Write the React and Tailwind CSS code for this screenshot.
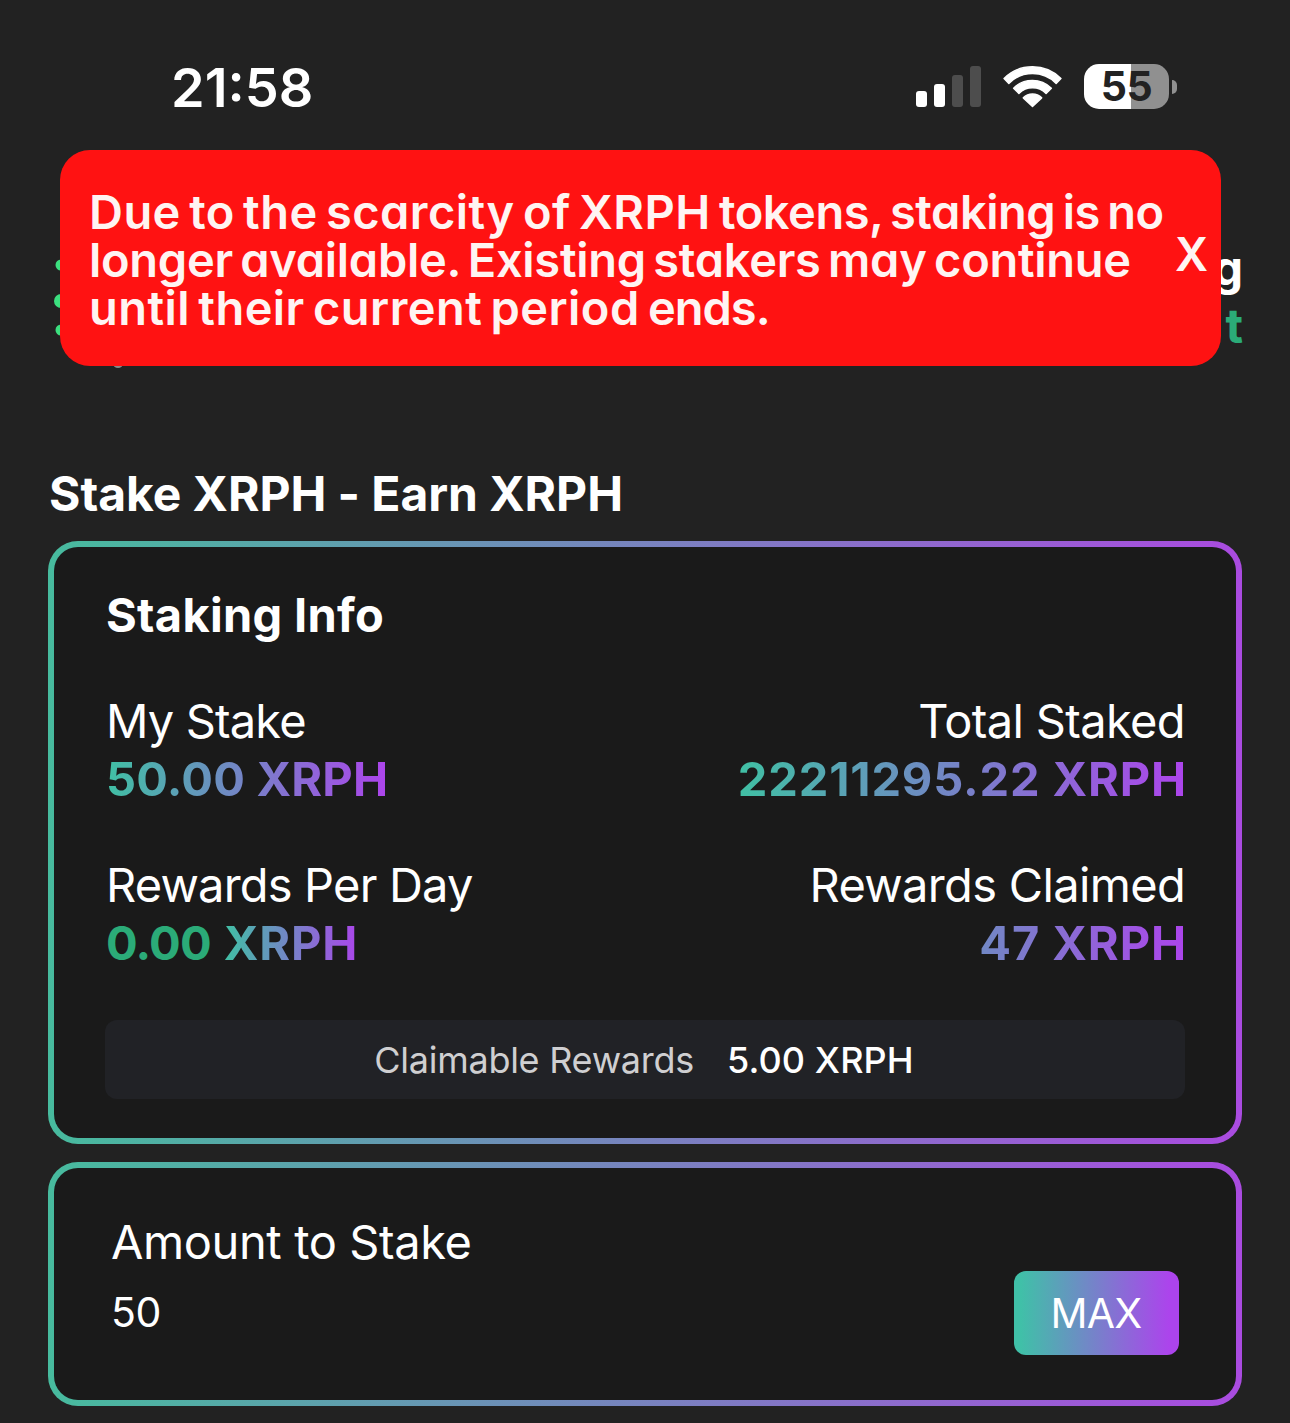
const gradientText =
  "bg-[linear-gradient(90deg,#40c0a4,#ad44ec)] bg-clip-text text-transparent font-bold";

function StatusBar() {
  return (
    <div className="flex h-[150px] items-start justify-between pl-[171px] pr-[113px] pt-[58px]">
      <div className="text-[54px] leading-[60px] font-semibold">21:58</div>
      <div className="flex items-start pt-1.5">
        <div className="mt-0.5 mr-[21px] flex h-[41px] items-end gap-[7px]">
          <span className="h-4 w-[11px] rounded-[3px] bg-white" />
          <span className="h-[23px] w-[11px] rounded-[3px] bg-white" />
          <span className="h-8 w-[11px] rounded-[3px] bg-[#4d4d4d]" />
          <span className="h-[41px] w-[11px] rounded-[3px] bg-[#4d4d4d]" />
        </div>
        <svg
          className="mr-[21px]"
          width="61"
          height="46"
          viewBox="-0.7 -1 62.4 47"
          fill="white"
          stroke="white"
          strokeWidth="1.5"
          strokeLinejoin="round"
        >
          <path d="M1.4 13.9A41.2 41.2 0 0 1 59.6 13.9L54.7 18.8A34.2 34.2 0 0 0 6.3 18.8Z" />
          <path d="M11.2 23.7A27.3 27.3 0 0 1 49.8 23.7L44.4 29.1A19.7 19.7 0 0 0 16.6 29.1Z" />
          <path d="M21.1 33.6A13.3 13.3 0 0 1 39.9 33.6L30.5 42.4Z" />
        </svg>
        <div className="flex h-[45px] w-[85px] items-center justify-center rounded-[15px] bg-[linear-gradient(90deg,#fff_47px,#909090_47px)] text-[41px] leading-[45px] font-bold tracking-[-0.5px] text-[#222222]">
          55
        </div>
        <span className="mt-4 ml-[3px] h-3.5 w-[5px] rounded-r-full bg-[#909090]" />
      </div>
    </div>
  );
}

function Header() {
  return (
    <div className="relative h-[315px]">
      <div className="flex justify-between pl-[54px] pr-12 pt-[88px]">
        <svg width="80" height="132" viewBox="0 0 80 132">
          <circle cx="7" cy="27" r="5.5" fill="#3ce07f" />
          <circle cx="7" cy="63" r="7" fill="#3ce07f" />
          <circle cx="7" cy="92" r="5.5" fill="#3ce07f" />
          <ellipse cx="64" cy="126" rx="5" ry="4" fill="#8a8a8a" />
        </svg>
        <div className="-mr-px flex flex-col pt-px text-right text-[48px] leading-[58px] font-bold">
          <span>g</span>
          <span className="text-[#2bab78]">t</span>
        </div>
      </div>
      <div className="absolute top-0 left-[60px] flex h-[216px] w-[1161px] items-start justify-between rounded-[30px] bg-[#ff1212] pt-[38px] pr-[13px] pl-[29px]">
        <p className="text-[47px] leading-[48px] font-semibold whitespace-nowrap text-[#fff4f2] [font-feature-settings:'cv11'] [word-spacing:-4px]">
          <span className="block tracking-[0.45px]">
            Due to the scarcity of XRPH <span className="tracking-[-0.46px]">tokens, staking is no</span>
          </span>
          <span className="block tracking-[-0.29px]">longer available. Existing stakers may continue</span>
          <span className="block tracking-[0.45px]">
            until their current period <span className="tracking-[-1px]">ends.</span>
          </span>
        </p>
        <button className="mt-[42px] text-[46px] leading-[48px] font-semibold text-[#fff4f2]">X</button>
      </div>
    </div>
  );
}

function Card({ className, children }) {
  return (
    <section className="rounded-[30px] bg-[linear-gradient(90deg,#47bb9e,#aa4be0)] p-1.5">
      <div className={`rounded-[24px] bg-[#1a1a1a] ${className}`}>{children}</div>
    </section>
  );
}

export default function App() {
  return (
    <main className="h-[1423px] w-[1290px] overflow-hidden bg-[#222222] font-['Inter',sans-serif] text-white">
      <StatusBar />
      <Header />
      <div className="flex flex-col px-12">
        <h1 className="mb-[18px] pl-px text-[48px] leading-[58px] font-bold tracking-[-0.05px]">
          Stake XRPH - Earn XRPH
        </h1>

        <Card className="h-[591px] px-[51px] pt-[39px]">
          <h2 className="pl-px text-[47px] leading-[58px] font-bold tracking-[0.3px]">Staking Info</h2>
          <div className="mt-12 flex justify-between pl-px text-[47px] leading-[58px] whitespace-nowrap">
            <div className="flex flex-col items-start">
              <span className="tracking-[-0.85px]">My Stake</span>
              <span className={`${gradientText} tracking-[0.2px]`}>50.00 XRPH</span>
              <span className="mt-12 tracking-[-0.82px]">Rewards Per Day</span>
              <span className="flex gap-[13px] font-bold">
                <span className="tracking-[-0.8px] text-[#2bab78]">0.00</span>
                <span className={`${gradientText} pr-0.5 tracking-[0.8px]`}>XRPH</span>
              </span>
            </div>
            <div className="flex flex-col items-end text-right">
              <span className="tracking-[-0.65px]">Total Staked</span>
              <span className={`${gradientText} -mr-0.5 tracking-[0.85px]`}>22211295.22 XRPH</span>
              <span className="mt-12 tracking-[-0.67px]">Rewards Claimed</span>
              <span className={`${gradientText} -mr-0.5 w-[376px] tracking-[0.9px]`}>47 XRPH</span>
            </div>
          </div>
          <div className="mt-12 flex h-[79px] items-center justify-center gap-[33px] rounded-xl bg-[#212226] pr-0.5 text-[36px] leading-none">
            <span className="tracking-[-0.27px] text-[#cfcfd1]">Claimable Rewards</span>
            <span className="pt-px font-medium tracking-[0.1px]">5.00 XRPH</span>
          </div>
        </Card>

        <div className="mt-[18px]">
          <Card className="flex h-[232px] items-start justify-between pr-[57px] pl-[57px]">
            <div className="pt-[45px]">
              <div className="text-[47px] leading-[58px] tracking-[-0.4px]">Amount to Stake</div>
              <div className="mt-3 text-[41px] leading-[58px] tracking-[-0.5px]">50</div>
            </div>
            <button className="mt-[103px] h-[84px] w-[165px] rounded-xl bg-[linear-gradient(90deg,#40c0a8_4%,#ac44ec_94%)] pr-px text-[41px] leading-[82px] tracking-[-0.7px]">
              MAX
            </button>
          </Card>
        </div>
      </div>
    </main>
  );
}
